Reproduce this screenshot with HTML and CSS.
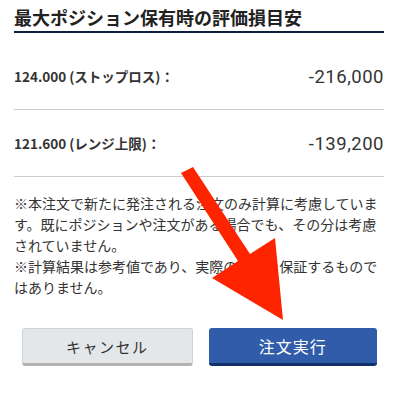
FILE: index.html
```html
<!DOCTYPE html>
<html lang="ja">
<head>
  <meta charset="UTF-8" />
  <title>最大ポジション保有時の評価損目安</title>
  <link rel="stylesheet" href="styles.css">
</head>
<body>
  <div class="container">
    <h2 class="title">最大ポジション保有時の評価損目安</h2>

    <div class="loss-list">
      <div class="loss-row">
        <span class="loss-label">124.000 (ストップロス)：</span>
        <span class="loss-value">-216,000</span>
      </div>
      <div class="loss-row">
        <span class="loss-label">121.600 (レンジ上限)：</span>
        <span class="loss-value">-139,200</span>
      </div>
    </div>

    <div class="notes">
      <p>※本注文で新たに発注される注文のみ計算に考慮しています。既にポジションや注文がある場合でも、その分は考慮されていません。</p>
      <p>※計算結果は参考値であり、実際の損益を保証するものではありません。</p>
    </div>

    <div class="actions">
      <button class="btn btn-cancel">キャンセル</button>
      <button class="btn btn-primary">注文実行</button>
    </div>
  </div>

  <!-- annotation arrow -->
  <svg class="arrow" width="397" height="401" viewBox="0 0 397 401">
    <polygon points="181,173 193,167 250,254 275,238 283,320 212,278 238,261" fill="#ff2400" />
  </svg>
</body>
</html>
```

FILE: styles.css
```css
:root {
  --text-color: #333333;
  --title-color: #222222;
  --navy: #0b1e3a;
  --line-color: #cccccc;
  --primary-color: #305ca9;
  --primary-dark: #12306b;
  --cancel-bg: #e4e7ea;
}

* {
  box-sizing: border-box;
  margin: 0;
  padding: 0;
}

body {
  font-family: "Noto Sans CJK JP", "Noto Sans", sans-serif;
  color: var(--text-color);
  background: white;
  width: 397px;
  height: 401px;
  overflow: hidden;
  position: relative;
}

.container {
  padding: 0 13px 0 14px;
}

.title {
  font-size: 18px;
  font-weight: 700;
  line-height: 24px;
  color: var(--title-color);
  padding-top: 5px;
  padding-bottom: 2px;
  border-bottom: 2px solid var(--navy);
}

.loss-list {
  margin-top: 10px;
}

.loss-row {
  display: flex;
  align-items: center;
  justify-content: space-between;
  height: 67px;
  border-bottom: 1px solid var(--line-color);
}

.loss-label {
  font-size: 13.5px;
  font-weight: 700;
}

.loss-value {
  font-family: Roboto, "Noto Sans", sans-serif;
  font-size: 18.5px;
  letter-spacing: 0.5px;
  margin-top: 1px;
}

.notes {
  margin-top: 16px;
  font-size: 14px;
  line-height: 21px;
}

.actions {
  display: flex;
  gap: 16px;
  margin-top: 30px;
  padding: 0 7px 0 8px;
}

.btn {
  flex: 1;
  height: 38px;
  border-radius: 3px;
  font-family: inherit;
  cursor: pointer;
}

.btn-cancel {
  background: var(--cancel-bg);
  color: var(--text-color);
  border: 1px solid #cfd2d5;
  border-bottom: 3px solid #b3b3b3;
  font-size: 15px;
  letter-spacing: 1.5px;
}

.btn-primary {
  background: var(--primary-color);
  color: white;
  border: none;
  border-bottom: 3px solid var(--primary-dark);
  font-size: 16px;
  letter-spacing: 1px;
}

.arrow {
  position: absolute;
  left: 0;
  top: 0;
  pointer-events: none;
}
```
